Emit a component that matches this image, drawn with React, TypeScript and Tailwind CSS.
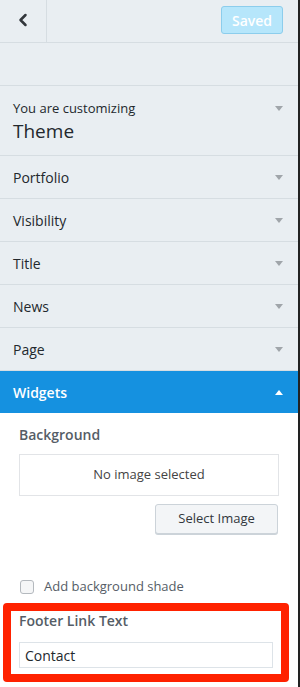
import { ChevronLeft } from 'lucide-react';

const sections = ['Portfolio', 'Visibility', 'Title', 'News', 'Page'];

function Caret({ up = false, className = '' }: { up?: boolean; className?: string }) {
  return (
    <svg width="8" height="5" viewBox="0 0 8 5" className={className}>
      {up ? <path d="M0 5 L4 0 L8 5 Z" fill="currentColor" /> : <path d="M0 0 L8 0 L4 5 Z" fill="currentColor" />}
    </svg>
  );
}

export default function App() {
  return (
    <div className="w-[300px] h-[687px] overflow-hidden flex bg-white" style={{ fontFamily: '"Open Sans", "Liberation Sans", sans-serif' }}>
      <div className="w-[298px] flex flex-col">
        {/* header */}
        <div className="h-[43px] flex items-stretch bg-[#e9eef2] border-b border-[#d6dde2]">
          <div className="w-[47px] flex items-center justify-center border-r border-[#d6dde2]">
            <ChevronLeft size={20} strokeWidth={3} className="text-[#32373c] -mt-[2px]" />
          </div>
          <div className="flex-1 flex items-start justify-end pt-[6px] pr-[15px]">
            <div className="w-[62px] h-[28px] rounded-[3px] bg-[#b6e6fb] border border-[#8ccdec] text-white text-[14px] font-semibold flex items-center justify-center">
              Saved
            </div>
          </div>
        </div>
        <div className="h-[43px] bg-[#e9eef2] border-b border-[#d6dde2]" />

        <div className="h-[70px] bg-[#e9eef2] border-b border-[#d6dde2] pl-[13px] pr-[15px] pt-[13px] flex justify-between">
          <div>
            <div className="text-[13px] leading-[18px] text-[#23282d]">You are customizing</div>
            <div className="text-[19px] leading-[26px] text-[#23282d] mt-[1px]">Theme</div>
          </div>
          <Caret className="text-[#a0a5aa] mt-[7px]" />
        </div>

        {sections.map(s => (
          <div key={s} className="h-[43px] bg-[#e9eef2] border-b border-[#d6dde2] pl-[13px] pr-[15px] flex items-center justify-between">
            <span className="text-[14px] text-[#23282d]">{s}</span>
            <Caret className="text-[#a0a5aa]" />
          </div>
        ))}

        <div className="h-[42px] bg-[#1591e0] pl-[13px] pr-[15px] flex items-center justify-between">
          <span className="text-[14px] font-semibold text-white">Widgets</span>
          <Caret up className="text-white" />
        </div>

        <div className="flex-1 bg-white px-[19px] pt-[12px]">
          <div className="text-[14px] leading-[20px] font-semibold text-[#555d66]">Background</div>
          <div className="mt-[9px] w-[260px] h-[42px] border border-[#e2e4e7] flex items-center justify-center text-[13px] text-[#444]">
            No image selected
          </div>
          <div className="flex justify-end w-[259px] mt-[8px]">
            <div className="w-[123px] h-[30px] rounded-[3px] border border-[#ccd3d9] bg-[#f3f5f7] shadow-[0_1px_0_#ccd3d9] flex items-center justify-center text-[13px] text-[#32373c]">
              Select Image
            </div>
          </div>
          <div className="mt-[43px] h-[20px] flex items-center gap-[10px] ml-[1px]">
            <div className="w-[14px] h-[14px] rounded-[3px] border border-[#b4b9be] bg-[#f5f6f7]" />
            <span className="text-[13px] text-[#555d66]">Add background shade</span>
          </div>

          {/* highlighted setting */}
          <div className="mt-[6px] -ml-[16px] w-[286px] h-[79px] border-[8px] border-[#ff2200] rounded-[4px] bg-white px-[8px]">
            <div className="text-[14px] leading-[20px] font-semibold text-[#555d66]">Footer Link Text</div>
            <div className="mt-[11px] w-[254px] h-[26px] border border-[#dde3e8] flex items-center px-[5px] text-[14px] text-[#23282d]">
              Contact
            </div>
          </div>
        </div>
      </div>
      <div className="w-[2px] bg-[#222]" />
    </div>
  );
}
